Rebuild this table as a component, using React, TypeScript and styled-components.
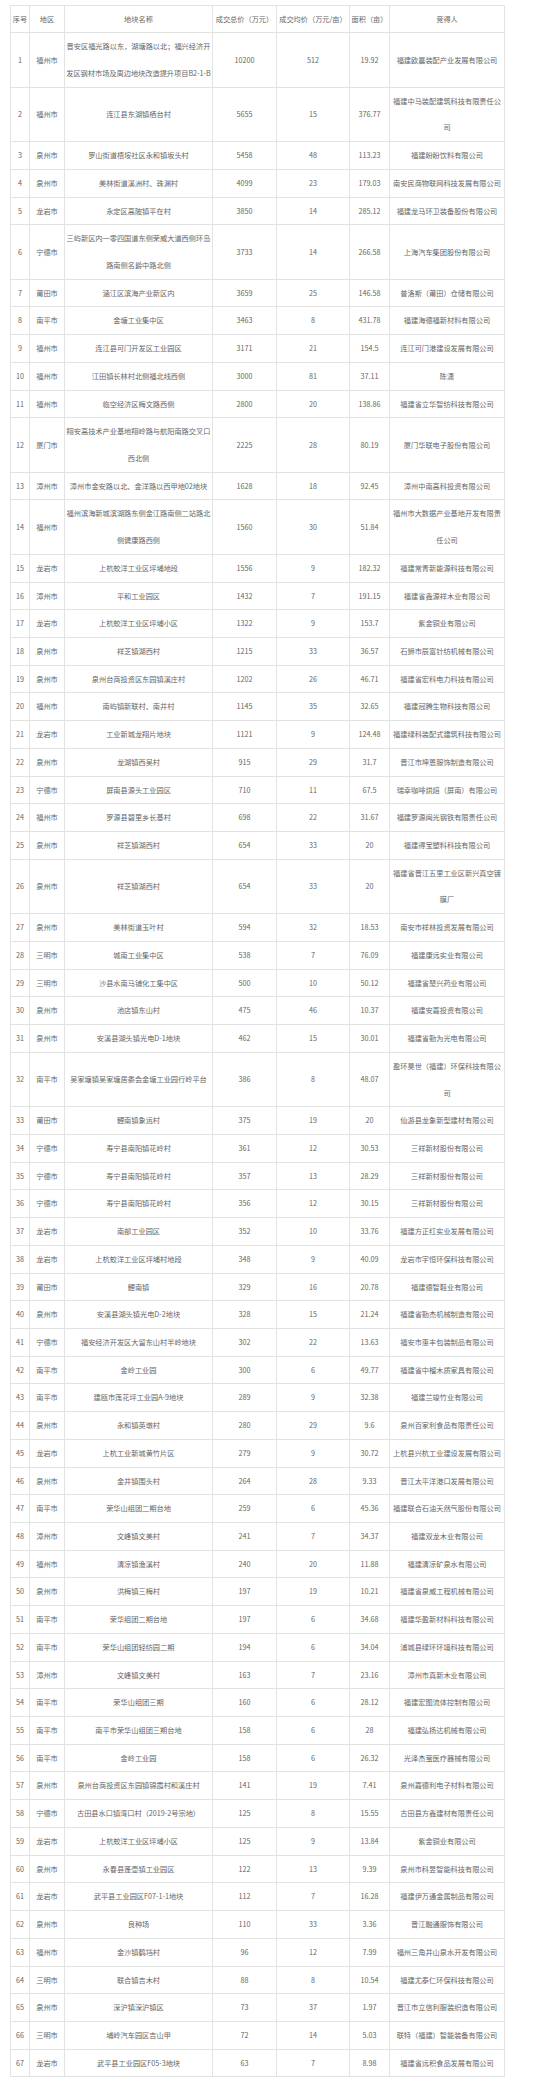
import React from "react";
import styled, { createGlobalStyle } from "styled-components";

const GlobalStyle = createGlobalStyle`
  html, body {
    margin: 0;
    padding: 0;
    background: #ffffff;
  }
  body {
    font-family: "Noto Sans CJK SC", "Noto Sans", sans-serif;
  }
`;

const Page = styled.div`
  padding: 5px 0 6px 10px;
`;

const Table = styled.table`
  border-collapse: collapse;
  table-layout: fixed;
  width: 494px;
  font-size: 7.2px;
  color: #666666;
`;

const Col = styled.col<{ $w: number }>`
  width: ${(p) => p.$w}px;
`;

const Cell = styled.td`
  border: 1px solid #e3e3e3;
  padding: 0;
  text-align: center;
  vertical-align: middle;
  line-height: 26.72px;
  white-space: pre;
  overflow: visible;
`;

const HeadCell = styled.th`
  border: 1px solid #e3e3e3;
  padding: 0;
  text-align: center;
  vertical-align: middle;
  line-height: 26.2px;
  white-space: pre;
  font-weight: normal;
`;

const widths = [19, 35, 148, 64, 73, 40, 115];

const headers = [
  "序号",
  "地区",
  "地块名称",
  "成交总价（万元）",
  "成交均价（万元/亩）",
  "面积（亩）",
  "竞得人",
];

type Row = [string, string, string, string, string, string, string];

const rows: Row[] = [
  ["1", "福州市", "晋安区福光路以东，湖塘路以北；福兴经济开\n发区钢材市场及周边地块改造提升项目B2-1-B", "10200", "512", "19.92", "福建欧晨装配产业发展有限公司"],
  ["2", "福州市", "连江县东湖镇栖台村", "5655", "15", "376.77", "福建中马装配建筑科技有限责任公\n司"],
  ["3", "泉州市", "罗山街道梧垵社区永和镇坂头村", "5458", "48", "113.23", "福建盼盼饮料有限公司"],
  ["4", "泉州市", "美林街道溪洲村、珠渊村", "4099", "23", "179.03", "南安民商物联网科技发展有限公司"],
  ["5", "龙岩市", "永定区高陂镇平在村", "3850", "14", "285.12", "福建龙马环卫装备股份有限公司"],
  ["6", "宁德市", "三屿新区内一零四国道东侧荣威大道西侧环岛\n路南侧名爵中路北侧", "3733", "14", "266.58", "上海汽车集团股份有限公司"],
  ["7", "莆田市", "涵江区滨海产业新区内", "3659", "25", "146.58", "普洛斯（莆田）仓储有限公司"],
  ["8", "南平市", "金塘工业集中区", "3463", "8", "431.78", "福建海德福新材料有限公司"],
  ["9", "福州市", "连江县可门开发区工业园区", "3171", "21", "154.5", "连江可门港建设发展有限公司"],
  ["10", "福州市", "江田镇长林村北侧福北线西侧", "3000", "81", "37.11", "陈潇"],
  ["11", "福州市", "临空经济区梅文路西侧", "2800", "20", "138.86", "福建省立华智纺科技有限公司"],
  ["12", "厦门市", "翔安高技术产业基地翔岭路与航阳南路交叉口\n西北侧", "2225", "28", "80.19", "厦门华联电子股份有限公司"],
  ["13", "漳州市", "漳州市金安路以北、金洋路以西甲地02地块", "1628", "18", "92.45", "漳州中南高科投资有限公司"],
  ["14", "福州市", "福州滨海新城滨湖路东侧金江路南侧二站路北\n侧健康路西侧", "1560", "30", "51.84", "福州市大数据产业基地开发有限责\n任公司"],
  ["15", "龙岩市", "上杭蛟洋工业区坪埔地段", "1556", "9", "182.32", "福建常青新能源科技有限公司"],
  ["16", "漳州市", "平和工业园区", "1432", "7", "191.15", "福建省鑫源祥木业有限公司"],
  ["17", "龙岩市", "上杭蛟洋工业区坪埔小区", "1322", "9", "153.7", "紫金铜业有限公司"],
  ["18", "泉州市", "祥芝镇湖西村", "1215", "33", "36.57", "石狮市辰富针纺机械有限公司"],
  ["19", "泉州市", "泉州台商投资区东园镇溪庄村", "1202", "26", "46.71", "福建省宏科电力科技有限公司"],
  ["20", "福州市", "南屿镇新联村、南井村", "1145", "35", "32.65", "福建冠腾生物科技有限公司"],
  ["21", "龙岩市", "工业新城龙翔片地块", "1121", "9", "124.48", "福建绿科装配式建筑科技有限公司"],
  ["22", "泉州市", "龙湖镇西吴村", "915", "29", "31.7", "晋江市坤恩服饰制造有限公司"],
  ["23", "宁德市", "屏南县源头工业园区", "710", "11", "67.5", "瑞幸咖啡烘焙（屏南）有限公司"],
  ["24", "福州市", "罗源县碧里乡长基村", "698", "22", "31.67", "福建罗源闽光钢铁有限责任公司"],
  ["25", "泉州市", "祥芝镇湖西村", "654", "33", "20", "福建得宝塑料科技有限公司"],
  ["26", "泉州市", "祥芝镇湖西村", "654", "33", "20", "福建省晋江五里工业区新兴真空镀\n膜厂"],
  ["27", "泉州市", "美林街道玉叶村", "594", "32", "18.53", "南安市祥林投资发展有限公司"],
  ["28", "三明市", "城南工业集中区", "538", "7", "76.09", "福建康远实业有限公司"],
  ["29", "三明市", "沙县水南马铺化工集中区", "500", "10", "50.12", "福建省楚兴药业有限公司"],
  ["30", "泉州市", "池店镇东山村", "475", "46", "10.37", "福建安嘉投资有限公司"],
  ["31", "泉州市", "安溪县湖头镇光电D-1地块", "462", "15", "30.01", "福建省勤为光电有限公司"],
  ["32", "南平市", "吴家塘镇吴家塘居委会金塘工业园行岭平台", "386", "8", "48.07", "盈环昊世（福建）环保科技有限公\n司"],
  ["33", "莆田市", "鲤南镇象运村", "375", "19", "20", "仙游县龙象新型建材有限公司"],
  ["34", "宁德市", "寿宁县南阳镇花岭村", "361", "12", "30.53", "三祥新材股份有限公司"],
  ["35", "宁德市", "寿宁县南阳镇花岭村", "357", "13", "28.29", "三祥新材股份有限公司"],
  ["36", "宁德市", "寿宁县南阳镇花岭村", "356", "12", "30.15", "三祥新材股份有限公司"],
  ["37", "龙岩市", "南部工业园区", "352", "10", "33.76", "福建方正红实业发展有限公司"],
  ["38", "龙岩市", "上杭蛟洋工业区坪埔村地段", "348", "9", "40.09", "龙岩市宇恒环保科技有限公司"],
  ["39", "莆田市", "鲤南镇", "329", "16", "20.78", "福建德智鞋业有限公司"],
  ["40", "泉州市", "安溪县湖头镇光电D-2地块", "328", "15", "21.24", "福建省勤杰机械制造有限公司"],
  ["41", "宁德市", "福安经济开发区大留东山村半岭地块", "302", "22", "13.63", "福安市惠丰包装制品有限公司"],
  ["42", "南平市", "金岭工业园", "300", "6", "49.77", "福建省中榴木质家具有限公司"],
  ["43", "南平市", "建瓯市莲花坪工业园A-9地块", "289", "9", "32.38", "福建兰竣竹业有限公司"],
  ["44", "泉州市", "永和镇英墩村", "280", "29", "9.6", "泉州百家利食品有限责任公司"],
  ["45", "龙岩市", "上杭工业新城黄竹片区", "279", "9", "30.72", "上杭县兴杭工业建设发展有限公司"],
  ["46", "泉州市", "金井镇围头村", "264", "28", "9.33", "晋江太平洋港口发展有限公司"],
  ["47", "南平市", "荣华山组团二期台地", "259", "6", "45.36", "福建联合石油天然气股份有限公司"],
  ["48", "漳州市", "文峰镇文美村", "241", "7", "34.37", "福建双龙木业有限公司"],
  ["49", "福州市", "清凉镇渔溪村", "240", "20", "11.88", "福建清凉矿泉水有限公司"],
  ["50", "泉州市", "洪梅镇三梅村", "197", "19", "10.21", "福建省泉威工程机械有限公司"],
  ["51", "南平市", "荣华组团二期台地", "197", "6", "34.68", "福建华盈新材料科技有限公司"],
  ["52", "南平市", "荣华山组团轻纺园二期", "194", "6", "34.04", "浦城县绿环环境科技有限公司"],
  ["53", "漳州市", "文峰镇文美村", "163", "7", "23.16", "漳州市真新木业有限公司"],
  ["54", "南平市", "荣华山组团三期", "160", "6", "28.12", "福建宏图流体控制有限公司"],
  ["55", "南平市", "南平市荣华山组团三期台地", "158", "6", "28", "福建弘扬达机械有限公司"],
  ["56", "南平市", "金岭工业园", "158", "6", "26.32", "光泽杰萤医疗器械有限公司"],
  ["57", "泉州市", "泉州台商投资区东园镇锦霞村和溪庄村", "141", "19", "7.41", "泉州嘉德利电子材料有限公司"],
  ["58", "宁德市", "古田县水口镇湾口村（2019-2号宗地）", "125", "8", "15.55", "古田县方鑫建材有限责任公司"],
  ["59", "龙岩市", "上杭蛟洋工业区坪埔小区", "125", "9", "13.84", "紫金铜业有限公司"],
  ["60", "泉州市", "永春县蓬壶镇工业园区", "122", "13", "9.39", "泉州市科昱智能科技有限公司"],
  ["61", "龙岩市", "武平县工业园区F07-1-1地块", "112", "7", "16.28", "福建伊万通金属制品有限公司"],
  ["62", "泉州市", "良种场", "110", "33", "3.36", "晋江融通服饰有限公司"],
  ["63", "福州市", "金沙镇鹤垱村", "96", "12", "7.99", "福州三角井山泉水开发有限公司"],
  ["64", "三明市", "联合镇吉木村", "88", "8", "10.54", "福建尤泰仁环保科技有限公司"],
  ["65", "泉州市", "深沪镇深沪镇区", "73", "37", "1.97", "晋江市立信利服装织造有限公司"],
  ["66", "三明市", "埔岭汽车园区吉山甲", "72", "14", "5.03", "联特（福建）智能装备有限公司"],
  ["67", "龙岩市", "武平县工业园区F05-3地块", "63", "7", "8.98", "福建省远积食品发展有限公司"],
];

export default function App() {
  return (
    <>
      <GlobalStyle />
      <Page>
        <Table>
          <colgroup>
            {widths.map((w, i) => (
              <Col key={i} $w={w} />
            ))}
          </colgroup>
          <thead>
            <tr>
              {headers.map((h) => (
                <HeadCell key={h}>{h}</HeadCell>
              ))}
            </tr>
          </thead>
          <tbody>
            {rows.map((r) => (
              <tr key={r[0]}>
                {r.map((c, i) => (
                  <Cell key={i}>{c}</Cell>
                ))}
              </tr>
            ))}
          </tbody>
        </Table>
      </Page>
    </>
  );
}
